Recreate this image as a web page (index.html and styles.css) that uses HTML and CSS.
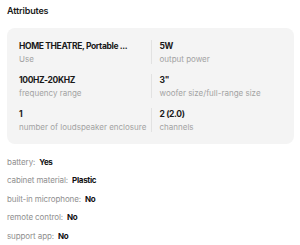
FILE: index.html
```html
<!DOCTYPE html>
<html>
<head>
<meta charset="utf-8">
<link rel="stylesheet" href="styles.css">
</head>
<body>
<div class="page">
  <h2 class="title">Attributes</h2>
  <div class="card">
    <div class="cell">
      <div class="value">HOME THEATRE, Portable ...</div>
      <div class="label">Use</div>
    </div>
    <div class="cell right">
      <div class="value">5W</div>
      <div class="label">output power</div>
    </div>
    <div class="cell">
      <div class="value">100HZ-20KHZ</div>
      <div class="label">frequency range</div>
    </div>
    <div class="cell right">
      <div class="value">3"</div>
      <div class="label">woofer size/full-range size</div>
    </div>
    <div class="cell">
      <div class="value">1</div>
      <div class="label">number of loudspeaker enclosure</div>
    </div>
    <div class="cell right">
      <div class="value">2 (2.0)</div>
      <div class="label">channels</div>
    </div>
  </div>
  <ul class="list">
    <li><span class="k">battery:</span><span class="v">Yes</span></li>
    <li><span class="k">cabinet material:</span><span class="v">Plastic</span></li>
    <li><span class="k">built-in microphone:</span><span class="v">No</span></li>
    <li><span class="k">remote control:</span><span class="v">No</span></li>
    <li><span class="k">support app:</span><span class="v">No</span></li>
  </ul>
</div>
</body>
</html>
```

FILE: styles.css
```css
html, body {
  margin: 0;
  padding: 0;
  background: #ffffff;
}
body {
  font-family: Inter, "Noto Sans", sans-serif;
  color: #1a1a1a;
}
.page {
  padding: 4px 6px 0 7px;
}
.title {
  margin: 0;
  font-size: 9px;
  font-weight: 600;
  line-height: 14px;
  letter-spacing: -0.15px;
}
.card {
  margin-top: 10px;
  background: #f4f4f4;
  border-radius: 8px;
  padding: 12px 12px 12px 12px;
  display: grid;
  grid-template-columns: 1fr 1fr;
  row-gap: 10px;
}
.cell {
  display: flex;
  flex-direction: column;
  gap: 2px;
  min-width: 0;
}
.cell.right {
  border-left: 1px solid #e2e2e2;
  padding-left: 8px;
}
.value {
  font-size: 8.5px;
  font-weight: 700;
  line-height: 13px;
  letter-spacing: -0.35px;
  white-space: nowrap;
}
.label {
  font-size: 8px;
  line-height: 9px;
  color: #a3a3a3;
  white-space: nowrap;
}
.list {
  list-style: none;
  margin: 12px 0 0 0;
  padding: 0;
  display: flex;
  flex-direction: column;
  gap: 6.4px;
}
.list li {
  font-size: 8px;
  line-height: 12px;
  display: flex;
  gap: 4px;
  letter-spacing: -0.1px;
}
.k {
  color: #8f8f8f;
}
.v {
  font-weight: 700;
  color: #111;
  letter-spacing: -0.3px;
}
```
